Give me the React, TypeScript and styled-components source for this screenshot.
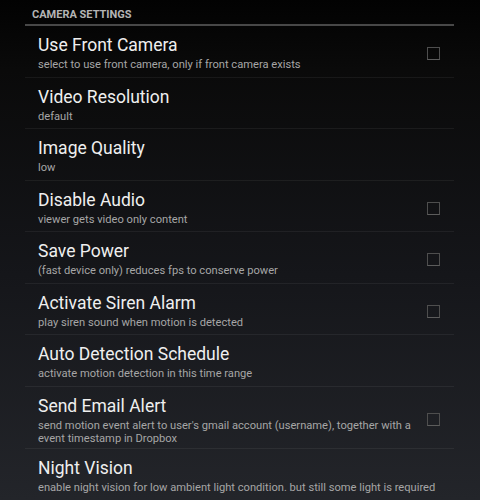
import React from "react";
import styled, { createGlobalStyle } from "styled-components";

const Global = createGlobalStyle`
  html, body { margin: 0; padding: 0; }
  body {
    width: 480px;
    height: 500px;
    overflow: hidden;
    background: linear-gradient(to bottom, #020202 0%, #0a0a0a 14%, #15161a 55%, #23252a 100%);
    font-family: Roboto, "Noto Sans", sans-serif;
  }
`;

const Page = styled.div`
  width: 480px;
  height: 500px;
  padding-left: 25px;
  box-sizing: border-box;
`;

const Panel = styled.div`
  width: 429px;
`;

const Header = styled.div`
  height: 26px;
  box-sizing: border-box;
  padding: 8px 0 0 7px;
  font-size: 11px;
  line-height: 13px;
  font-weight: 700;
  color: #b4b4b4;
  border-bottom: 2px solid #484848;
`;

const Row = styled.div<{ $last?: boolean; $check?: boolean }>`
  display: flex;
  align-items: flex-start;
  gap: 12px;
  min-height: 51.5px;
  box-sizing: border-box;
  padding: 8px ${(p) => (p.$check ? "14px" : "0")} 3px 13px;
  border-bottom: 1px solid ${(p) => (p.$last ? "transparent" : "rgba(255,255,255,0.06)")};
`;

const Texts = styled.div`
  flex: 1;
  min-width: 0;
`;

const Title = styled.div`
  font-size: 17.5px;
  line-height: 22px;
  color: #efefef;
`;

const Summary = styled.div`
  margin-top: 2px;
  font-size: 11.15px;
  line-height: 13px;
  color: #a6a6a6;
`;

const Check = styled.div`
  width: 13px;
  height: 13px;
  box-sizing: border-box;
  border: 1px solid #4e4e4e;
  border-bottom-color: #5c5c5c;
  flex: none;
  align-self: center;
`;

type Item = { title: string; summary: string; check?: boolean };

const items: Item[] = [
  { title: "Use Front Camera", summary: "select to use front camera, only if front camera exists", check: true },
  { title: "Video Resolution", summary: "default" },
  { title: "Image Quality", summary: "low" },
  { title: "Disable Audio", summary: "viewer gets video only content", check: true },
  { title: "Save Power", summary: "(fast device only) reduces fps to conserve power", check: true },
  { title: "Activate Siren Alarm", summary: "play siren sound when motion is detected", check: true },
  { title: "Auto Detection Schedule", summary: "activate motion detection in this time range" },
  {
    title: "Send Email Alert",
    summary: "send motion event alert to user's gmail account (username), together with a event timestamp in Dropbox",
    check: true,
  },
  { title: "Night Vision", summary: "enable night vision for low ambient light condition. but still some light is required" },
];

export default function App() {
  return (
    <>
      <Global />
      <Page>
        <Panel>
          <Header>CAMERA SETTINGS</Header>
          {items.map((it, i) => (
            <Row key={it.title} $last={i === items.length - 1} $check={it.check}>
              <Texts>
                <Title>{it.title}</Title>
                <Summary>{it.summary}</Summary>
              </Texts>
              {it.check && <Check />}
            </Row>
          ))}
        </Panel>
      </Page>
    </>
  );
}
